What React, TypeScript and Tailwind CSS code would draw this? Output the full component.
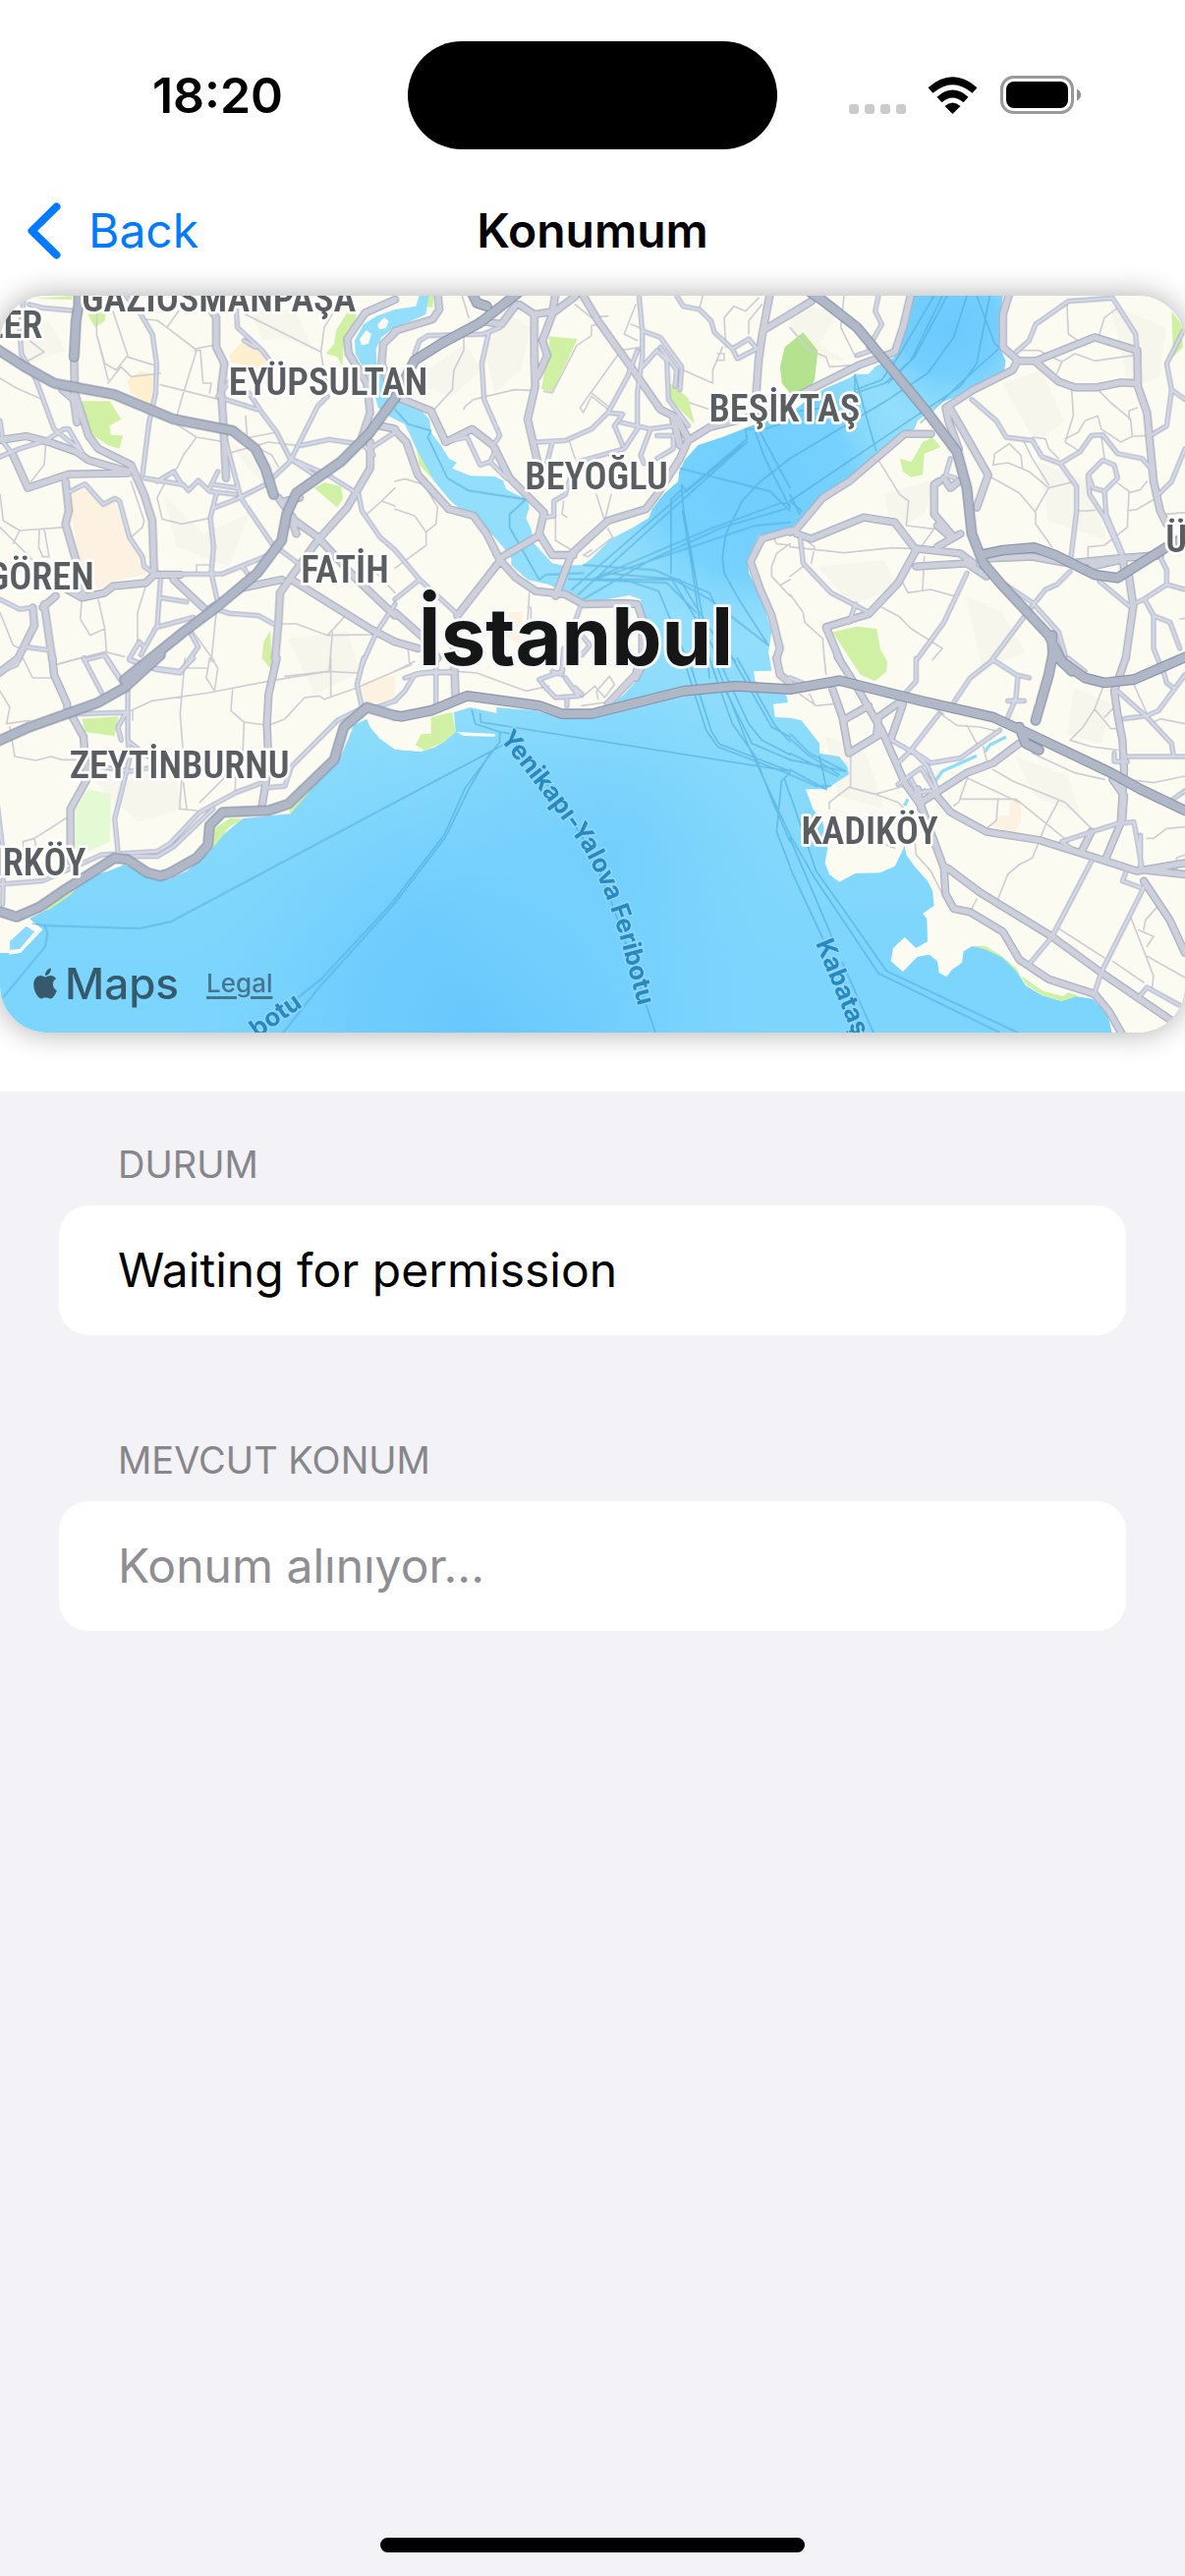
import React from "react";
import { FaApple } from "react-icons/fa";

type Tile = {
  x: number;
  y: number;
  highway: string;
  major: string;
  mid: string;
  minor: string;
  ferry: string;
};

const tiles: Tile[] = [
  {
    x: 0,
    y: 0,
    highway:
      "M-10 195 L75 250 L165 300 L350 335 L530 410 L710 445 L780 500 L810 560 L835 640 M1206 345 L1130 450 L1040 540 L905 635 L875 700 L860 780 L785 880 L660 985 L560 1060 L380 1205 M240 20 L240 60 L232 110 L226 220",
    major:
      "M226 220 L228 330 L270 460 L300 500 L400 550 L440 640 L465 720 L470 870 M190 320 L225 350 L235 420 M-10 475 L80 462 L150 480 L235 510 L270 535 L390 570 M85 620 L210 578 L390 575 M470 885 L445 910 L345 920 L320 940 L250 955 L205 930 M1206 45 L1115 85 L1060 165 L1065 210 L1120 300 L1130 390 L1100 480 M1206 145 L1170 180 L1165 240 L1190 310 M1130 480 L1130 560 L1060 680 L970 780 L890 890 L855 940 L850 1030 L840 1140 M860 900 L740 925 L640 990 M850 650 L900 720 L970 770 L1080 890 L1206 1010 M890 900 L1010 975 L1130 1050 L1206 1090 M100 985 L105 1040 L55 1140 L-10 1190 M135 975 L150 1080 L160 1145 M170 950 L130 985 M530 900 L620 985 M635 60 L660 100 L660 190 L685 240 L675 320 L683 440 L690 590 M40 520 L85 620 M200 600 L210 690 L200 730 L240 870 L255 950 M1206 440 L1160 430 M475 885 L550 885 M870 660 L915 650 M880 690 L905 760",
    mid:
      "M75 33 L60 130 L65 210 L110 290 L165 440 L240 500 M90 60 L130 70 L220 78 M385 33 L430 90 L465 150 L478 240 L475 330 L455 420 L435 580 M0 415 L10 480 L40 520 M0 525 L60 500 L140 475 L195 440 L210 440 L250 510 M440 590 L560 610 L575 628 L605 597 L640 630 L720 640 M720 60 L725 130 L800 200 L830 240 M745 170 L780 190 M760 330 L800 390 L845 450 L885 530 L960 580 M690 350 L785 380 M885 540 L810 610 L720 655 L655 680 M885 540 L970 370 L1000 340 M885 530 L1000 580 L1080 630 M920 490 L1005 472 L1090 485 M480 600 L530 570 L555 610 M690 480 L735 650 L830 790 L910 850 M660 640 L642 710 L652 800 L645 880 L665 970 M545 883 L680 882 L820 825 M740 860 L755 880 M205 635 L260 608 L315 670 L350 652 L365 660 L395 770 L435 830 L440 860 L470 880 M490 900 L480 1040 L430 1130 M490 955 L570 968 M480 1045 L590 1015 M660 990 L700 1003 L790 1010 L835 1035 M1095 640 L1105 690 L1160 770 L1206 810 M1206 975 L1150 1060 L1105 1160 M0 960 L60 990 L100 985 M75 1105 L145 1115 M395 1140 L425 1090 L440 1105 M395 1145 L480 1175 L550 1185 L605 1105 L580 1060 M260 1145 L320 1130 L365 1200 M665 570 L640 620 M655 610 L720 620 M1130 500 L1206 450 M665 340 L705 290 M1100 480 L1140 520",
    minor:
      "M295 60 L295 150 L330 290 M345 80 L390 215 L355 260 L320 240 L295 150 M390 220 L470 245 M330 300 L370 250 L400 280 L490 270 M445 105 L480 108 L510 130 L595 195 L650 185 M510 130 L545 80 M600 200 L560 330 L540 400 M595 200 L612 200 L620 300 L645 300 L640 330 M490 305 L670 350 M750 90 L980 205 L990 130 L1020 80 M980 205 L990 270 L1010 330 M0 285 L50 315 L130 350 M65 150 L135 205 L80 235 M500 400 L600 465 L690 480 M600 465 L560 520 L540 560 L500 590 M500 610 L480 650 L495 715 L555 730 L640 712 M740 470 L845 450 M695 515 L820 480 L905 490 M750 400 L755 480 L830 520 L850 555 M400 600 L440 720 L435 740 L395 775 M60 750 L200 740 M0 640 L10 720 L60 750 L40 790 M0 740 L50 790 L110 850 M120 750 L118 800 L130 830 L150 830 L135 745 M445 920 L420 1000 L420 1090 M250 960 L245 1020 L275 1070 L320 1050 L300 960 M320 1050 L325 1120 M0 1000 L40 1100 L60 1110 M170 1160 L320 1120 L380 1135 M660 1000 L645 1150 M590 1060 L655 1150 M850 1035 L905 1035 L1000 1070 L1050 1015 M1000 1070 L1140 1068 M1015 1060 L1005 1180 L870 1195 M1120 700 L1165 660 L1206 675 M1165 660 L1206 620 M1140 870 L1206 940 M140 480 L135 550 L95 600 M600 875 L600 855 L640 855",
    ferry: "",
  },
  {
    x: 1206,
    y: 0,
    highway: "M375 25 L260 115 L140 180 L60 230 L0 345 M235 25 L250 55 L280 65",
    major:
      "M130 25 L135 75 L115 105 L0 140 M380 60 L425 90 L425 210 L428 310 L405 410 L435 540 M490 25 L480 90 L450 170 L465 215 L435 280 M570 25 L620 110 L720 250 L810 380 L860 405 L895 470 M425 90 L490 80 L550 35 M260 110 L325 120 L370 60 M0 340 L110 385 L155 480 L235 440 L300 490 L350 590 L400 640 L455 695 L440 760 L480 825 L545 825 M1145 25 L1120 160 L1110 230 L1100 370 M1206 90 L1130 135 M895 475 L960 435 L1100 400 M895 475 L870 530 L800 640 L765 685 L650 720 L540 820 L490 950 M440 765 L320 835 M0 445 L35 480 L70 580 L165 685 L240 705 L280 760 L320 840 L370 895 L430 935 L520 945 L575 975 L700 972 L740 975 L755 1020 M315 850 L190 1010 M0 1000 L90 1080 L130 1140 M0 1090 L70 1110 M755 1020 L755 1160 L735 1200 M1206 750 L1120 775 L1085 845 L1115 930 L1150 1010 L1175 1110 L1165 1140 M180 1050 L180 1145 M850 410 L870 490",
    mid:
      "M60 210 L75 170 L100 155 L270 150 L320 130 M285 150 L265 240 L272 350 L320 460 L300 490 M430 480 L520 475 L600 440 L650 390 L710 280 L740 200 M745 33 L755 140 L755 220 L740 330 L740 440 L700 500 L560 540 M755 140 L810 160 L875 250 L870 320 M755 250 L800 200 L830 230 L835 350 L895 430 M810 190 L860 260 L855 310 M860 33 L880 65 L930 75 L965 110 L975 145 L1030 195 L1080 165 L1105 195 L1045 225 L1030 195 M650 390 L695 395 L670 430 L695 490 M690 420 L780 440 L850 430 M780 440 L750 520 L760 545 M800 460 L850 460 L850 500 L800 530 M480 480 L460 560 M150 480 L220 465 L260 550 L290 540 L310 500 M290 540 L340 590 M535 590 L520 640 L485 660 L485 705 L455 710 M0 810 L75 900 L190 1005 M75 900 L0 960 M565 985 L545 1040 L595 1100 L570 1130 M515 1110 L510 1180 M480 1180 L510 1190 M30 1200 L80 1185 L180 1180 M125 1140 L125 1160",
    minor:
      "M205 33 L225 100 M210 160 L210 200 L180 260 L175 320 L120 380 M210 380 L215 370 L240 350 L365 320 L415 322 M600 125 L600 155 L555 185 L480 330 L455 325 M550 60 L600 100 L650 95 M600 125 L620 120 M700 150 L740 170 M700 150 L735 60 M720 120 L745 130 M750 190 L690 200 L565 375 L575 390 L600 340 L650 380 M600 330 L650 370 M530 470 L550 530 M880 260 L970 300 L970 260 L1000 190 M900 360 L960 380 M1010 190 L1005 100 L1035 65 L1070 80 L1110 40 M1080 150 L1080 110 L1120 60 M930 70 L940 33 M985 210 L1005 210 L1005 230 L985 230 M0 600 L30 592 L90 610 L130 680 L125 730 L95 755 L60 705 L0 685 M95 755 L95 795 L0 865 M490 700 L490 780 L540 810 M615 640 L640 720 L660 640 M650 745 L665 770 L590 830 L575 825 L600 810 M515 660 L510 700 L525 710 M1206 790 L1165 820 L1150 860 L1150 890 L1206 950 M1180 915 L1206 900 M410 940 L405 1030 M405 985 L415 985 L415 1035 L390 1035 M0 1180 L60 1150 M40 1115 L45 1160 M1150 760 L1165 790 L1206 795",
    ferry:
      "M0 380 L40 425 L110 445 L100 465 L160 590 L225 628 L400 655 L350 700 L350 740 L440 900 L460 885 L575 880 M540 930 L875 640 L1075 470 L1070 440 L1130 440 L1206 415 M560 945 L740 780 L1075 480 M843 880 L843 655 L875 625 M875 610 L880 680 L940 1020 L960 1200 M878 690 L905 850 L935 1060 L980 1200 M875 610 L890 630 L1060 490 M870 560 L1145 630 L1206 690 M1100 450 L1130 530 L1206 680 M1115 450 L1206 620 M1206 530 L1110 605 L1060 660 L1010 760 L1000 830 L1005 880 L1050 960 L1140 1100 M600 900 L950 750 L1180 665 L1206 670 M575 960 L780 840 L1000 740 L1206 680 M620 895 L1100 735 L1206 725 M575 855 L790 870 L960 940 L980 980 M530 898 L850 900 L960 960 L1140 1100 M530 898 L830 910 L920 1000 M640 880 L870 900 L960 1050 L1040 1150 M700 900 L805 935 L890 1140 M840 890 L1010 1170",
  },
  {
    x: 2412,
    y: 0,
    highway:
      "M65 25 L100 48 L205 130 L420 390 L510 510 L540 620 L555 760 L590 850 L650 920 L790 1070 L830 1150 L860 1180 M580 825 L650 810 L745 802 L810 825 L930 885 L1000 895 L1150 800 L1206 770 M800 1070 L803 1145",
    major:
      "M0 90 L65 50 M0 350 L210 245 L320 205 L345 130 L370 25 M670 25 L650 90 L650 190 L695 230 L680 260 L560 320 L475 375 L485 420 L515 500 M695 232 L750 232 L930 160 L1060 200 M750 235 L820 295 L870 313 L935 313 L1010 298 L1060 300 M1060 200 L1062 310 L1090 390 L1110 600 L1130 690 L1150 730 M430 455 L350 455 L180 600 L100 650 L20 745 L0 755 M490 380 L525 440 L605 580 L570 680 M20 760 L65 775 L225 710 L320 725 L385 810 L330 910 L240 1005 L110 1045 L150 1140 M385 805 L520 820 L560 850 M385 860 L540 850 L600 890 M610 835 L740 830 L850 850 L1000 835 L1130 825 M920 860 L1010 840 M1035 890 L1048 980 L1025 1140 M455 600 L440 610 L440 700 L500 770 M470 590 L490 620 L515 600 M450 800 L520 760 M450 735 L490 770 M1015 830 L1020 870",
    mid:
      "M690 205 L730 170 L750 120 L850 50 L985 40 L1055 150 L1060 210 M1206 130 L1150 240 L1165 320 L1150 430 L1100 460 M1165 320 L1206 350 M555 350 L630 415 L660 465 L740 475 L770 525 L825 545 L885 510 L920 460 L955 458 L1000 515 L1075 530 L1110 570 M825 545 L875 615 L875 690 L858 830 M1206 500 L1165 600 L1125 640 M955 535 L910 580 L925 620 L960 630 L1000 590 L990 550 Z M910 590 L915 640 L960 710 L1010 820 M960 630 L965 700 L1015 820 M270 33 L260 80 L280 120 L240 190 M205 215 L250 200 M30 760 L40 850 L125 940 L240 1000 M200 975 L180 1030 M540 880 L470 1030 L390 1140 M650 910 L740 970 L820 1060 L840 1130 M855 875 L815 915 L780 930 L740 980 L620 1140 M945 905 L1035 980 L1080 960 L1150 915 L1206 930 M1130 830 L1150 870 L1150 915 M1085 965 L1110 1010 L1110 1110 L1130 1160 M1110 1010 L1160 1030 L1190 1110 M490 530 L475 580 L505 590 M850 1140 L900 1180",
    minor:
      "M0 130 L60 200 L110 220 L120 250 L200 245 M165 33 L155 130 L200 220 M845 50 L850 150 L900 185 M1000 70 L960 100 L945 150 M700 200 L760 200 L830 235 L815 270 M830 235 L870 210 L930 232 L1050 215 M860 320 L865 400 L840 480 L880 505 M840 470 L880 450 L900 415 L940 400 L950 440 L1010 480 L1045 462 L1100 460 M940 320 L980 360 L1040 410 L1045 460 M1060 375 L1035 385 L1035 410 M620 550 L625 515 L670 485 L705 520 L710 560 M620 550 L665 543 L730 570 L790 620 L870 600 M710 470 L740 530 L790 610 M740 465 L780 470 L790 500 L820 530 M610 585 L700 635 L750 695 L750 730 L800 800 M790 620 L750 690 M950 460 L960 530 M1000 605 L1035 630 L1030 740 L960 795 L910 800 L910 830 M1035 635 L1070 625 L1090 600 M1030 690 L1060 685 L1120 650 M880 690 L900 690 L930 688 M0 800 L165 818 L310 803 L380 805 M30 765 L75 800 L65 850 M0 890 L40 860 M0 945 L40 1000 L45 1030 L100 1080 L105 1145 M280 985 L330 1010 L370 1050 L465 1110 L435 1145 M410 830 L405 930 M345 910 L360 940 L430 930 L500 950 M1150 700 L1206 695 M355 735 L440 745 L400 800 M1190 1020 L1206 1018 M270 535 L335 640 L362 660 L355 735",
    ferry:
      "M440 33 L330 220 L280 290 L200 320 M465 33 L370 230 L290 300 L200 330 M480 33 L380 220 L300 300 M540 33 L500 160 L420 270 L300 350 L0 530 M610 33 L570 240 L520 310 L340 430 L0 660 M570 33 L625 180 L640 192 L520 300 L400 420 M198 275 L262 505 M198 275 L198 330 M0 390 L100 375 M0 640 L30 700 M0 660 L35 690",
  },
  {
    x: 0,
    y: 1140,
    highway:
      "M490 -10 L380 90 L300 135 L90 210 L-10 255 M-10 770 L50 790 L120 760 L200 705 L350 610 L390 615 L450 655 L490 665 L520 655 L600 610 L635 570 L640 510 L680 470 L820 465 L880 445 L1020 310 L1050 210 L1120 150 L1206 175",
    major:
      "M160 0 L165 50 L205 140 M205 150 L255 240 L265 370 L215 460 L215 620 M845 0 L820 110 L815 200 L820 330 L800 450",
    mid:
      "M255 0 L310 105 M325 0 L370 70 M390 60 L390 240 L395 310 L350 490 L360 590 M240 170 L385 165 L360 210 L370 250 M400 5 L470 30 L550 40 L590 0 M395 255 L450 300 M0 690 L130 680 L310 600 L480 590 L520 565 L610 470 L720 410 L800 380 M400 605 L480 605 L530 575 L650 460 M820 395 L870 390 L890 330 L1030 190 L1110 150 M1110 0 L1090 80 L1105 150 M-8 450 L10 600 L8 750 M300 330 L400 345 L480 330 M1150 150 L1206 130 M0 40 L50 20 L60 0",
    minor:
      "M70 0 L100 60 L155 60 M0 100 L30 150 L20 200 L90 190 M30 210 L45 300 L110 312 L155 300 L190 310 L240 310 M400 160 L465 130 L640 105 L820 70 L1000 40 L1090 45 M1010 0 L1010 115 M565 0 L550 170 L560 300 L548 460 L600 465 M560 380 L570 460 M610 440 L720 330 M640 0 L630 60 L655 100 L665 30 L645 0 M565 30 L630 30 M710 95 L705 160 L745 195 L820 205 M745 195 L740 330 M820 205 L870 185 L930 120 L975 115 L990 125 L1090 90 L1206 40 M215 480 L105 550 L70 560 L75 620 M105 550 L115 600 M405 160 L405 190 M720 330 L718 410 M170 20 L240 0",
    ferry:
      "M100 810 L140 816 L425 825 L520 805 L1206 440 M135 815 L145 840 L138 880 L10 1035 M1206 735 L1180 765 L980 980 L880 1060 M1206 748 L970 1010 L865 1143",
  },
  {
    x: 1206,
    y: 1140,
    highway:
      "M0 175 L20 178 L110 160 L220 115 L440 145 L510 170 L600 170 L880 100 L1040 85 L1206 95",
    major: "M180 0 L185 120 M750 0 L735 50 L650 140 M1165 0 L1175 50 L1206 75",
    mid:
      "M125 0 L125 140 M0 130 L30 100 L60 50 L110 42 L185 45 M515 0 L510 40 L440 65 L465 95 L490 120 L560 115 L520 60 M525 120 L525 145 M550 90 L570 110",
    minor:
      "M190 40 L250 45 L400 100 L470 85 M0 40 L50 20 M570 145 L640 135 M570 120 L610 85 L640 120 L670 80 L655 55 L615 100 L620 125",
    ferry:
      "M0 440 L330 265 M0 735 L150 540 L215 395 L320 255 L320 225 M0 748 L155 545 L225 400 L290 290 M235 160 L245 200 L320 225 L350 230 M260 170 L262 195 L1206 345 M890 30 L950 220 L985 270 L1206 355 M905 30 L965 220 L990 262 L1206 345 M970 30 L1030 200 L1100 300 L1150 430 L1206 560 M985 30 L1080 270 L1206 540 M1000 30 L1080 200 L1120 250 L1206 295 M1030 0 L1150 210 L1206 240 M1045 0 L1160 205 L1206 255 M1010 100 L1090 260 L1206 310 M1206 350 L1180 375 L1165 530 L1206 635 M1190 370 L1206 420 M350 235 Q520 450 590 580 Q670 750 720 920 L795 1143",
  },
  {
    x: 2412,
    y: 1140,
    highway:
      "M0 95 L150 68 L400 130 L620 180 L750 240 L980 350 L1070 400 L1206 465 M800 0 L790 50 L750 190 M830 10 L900 60 L960 75 L1050 65 L1130 30 L1210 -5 M700 210 L720 260 L760 280",
    major:
      "M145 -5 L205 90 L280 220 L350 380 L400 450 L470 640 L475 720 L500 765 L550 775 L650 835 L700 920 L790 980 L930 1025 L975 1080 L1015 1150 M130 95 L160 180 L180 290 L270 235 M170 185 L240 145 M345 140 L310 240 M270 180 L340 130 M270 180 L265 230 M480 640 L580 715 L800 850 L950 960 L1170 1110 M400 440 L540 350 L620 320 L700 260 M390 400 L400 460 M440 410 L490 470 L600 530 L760 555 L920 605 L1060 650 L1206 625 M1025 0 L990 100 L1000 170 L1015 250 L1020 340 L1010 500 M985 370 L1020 420 L1015 490 L965 610 M1080 680 L1160 800 L1206 900 M1070 645 L1206 660 M890 590 L920 530",
    mid:
      "M385 0 L385 70 L340 120 M455 170 L370 280 L330 320 M370 280 L430 320 L520 305 L640 220 M310 250 L380 290 L420 330 L450 400 M330 385 L400 335 L440 400 M620 5 L690 50 L730 60 M695 60 L690 120 L665 180 M665 130 L715 130 M620 5 L550 60 L500 135 M920 620 L800 850 L730 935 M1080 700 L950 960 L930 1020 M1000 100 L1090 180 L1165 260 L1170 295 M1020 185 L1090 175 L1125 160 L1206 50 M1140 40 L1150 75 L1170 90 M1020 300 L1206 300 M830 560 L920 530 L1000 505 L1050 500 L1075 640 M1070 540 L1070 640 M830 560 L870 590 M1190 1060 L1090 1005 L1065 1035 M990 290 L990 315 L1030 315 M1025 655 L1015 680 L1070 700 M370 370 L390 410 L430 405 M1170 430 L1206 405 M0 60 L60 85",
    minor:
      "M105 0 L110 50 M185 290 L185 390 L120 440 L120 460 M185 395 L260 415 L350 390 M260 415 L330 440 L370 480 M30 110 L80 145 L130 140 M60 110 L75 140 M620 340 L680 375 L840 440 L920 520 M520 430 L690 430 L850 560 M540 370 L515 440 L500 450 M820 435 L780 510 L740 610 L700 630 L665 660 L635 735 M635 430 L630 495 L600 520 M540 365 L700 440 M380 540 L385 600 L430 650 L465 720 M570 735 L555 765 M740 290 L870 350 L960 370 M1030 370 L1110 380 L1206 360 M955 90 L930 155 L895 210 L855 250 L920 270 L1000 280 M930 155 L980 215 L1000 215 M960 180 L985 155 M1050 80 L1090 170 M1100 200 L1130 185 L1206 200 M1090 550 L1110 550 L1150 520 L1206 515 M820 825 L960 915 M985 925 L1080 990 M1040 790 L1110 970 L1105 1010 M1120 760 L1085 800 L1080 830 M1065 830 L1110 850 L1090 880 M1090 910 L1206 975 M460 170 L510 205 L580 210 L640 225 M540 205 L570 260 M400 130 L470 170 M590 270 L600 310 M1180 660 L1180 610 L1206 600 M240 550 L320 580",
    ferry:
      "M0 230 L60 290 L170 345 M0 245 L55 295 L150 355 M0 290 L145 360 M0 310 L170 345 M0 340 L110 400 M0 355 L80 390 L125 390 M90 300 L112 400 M0 415 L80 650 L180 790 L295 955 L695 1143 M0 540 L75 670 L270 962 L640 1143 M0 550 L130 855 M0 640 L100 855 M160 930 L255 1143",
  },
];

const SEA =
  "M2790 33 L2777 100 L2757 160 L2730 222 L2672 250 L2652 272 L2612 272 L2592 285 L2522 315 L2472 345 L2410 395 L2296 430 L2206 465 L2131 490 L2091 535 L2074 570 L2071 600 L2026 640 L1991 685 L1981 712 L1926 745 L1866 775 L1806 835 L1781 855 L1721 857 L1686 850 L1631 790 L1621 745 L1606 712 L1616 680 L1611 655 L1576 640 L1546 625 L1536 598 L1511 585 L1436 583 L1381 560 L1394 542 L1371 530 L1346 490 L1316 450 L1311 410 L1261 358 L1206 330 L1178 290 L1150 240 L1148 195 L1165 160 L1206 128 L1246 115 L1300 90 L1310 33 L1280 33 L1270 65 L1206 75 L1150 95 L1110 120 L1083 170 L1085 210 L1105 245 L1130 290 L1155 375 L1195 405 L1236 425 L1271 500 L1326 600 L1376 660 L1411 690 L1456 705 L1486 745 L1536 800 L1561 835 L1561 855 L1611 900 L1676 915 L1766 960 L1826 965 L1921 948 L1956 960 L1961 1000 L1981 1060 L1976 1120 L1951 1200 L1906 1250 L1866 1285 L1806 1320 L1716 1325 L1636 1300 L1516 1290 L1516 1308 L1436 1290 L1386 1305 L1391 1365 L1356 1395 L1326 1412 L1286 1425 L1206 1418 L1160 1385 L1130 1350 L1120 1325 L1080 1345 L1045 1430 L980 1500 L885 1615 L740 1630 L680 1680 L640 1730 L570 1790 L515 1815 L450 1800 L380 1770 L330 1790 L275 1805 L215 1860 L150 1905 L90 1935 L130 1968 L62 2040 L-5 2040 L-5 2290 L3397 2290 L3382 2230 L3337 2180 L3282 2172 L3242 2187 L3182 2170 L3132 2140 L3097 2085 L3052 2045 L3002 2020 L2967 2020 L2942 2035 L2937 2070 L2907 2090 L2890 2113 L2867 2100 L2862 2065 L2837 2045 L2800 2052 L2757 2097 L2720 2065 L2727 2025 L2762 1992 L2797 2025 L2832 2005 L2830 1935 L2817 1920 L2852 1895 L2847 1850 L2832 1820 L2792 1775 L2767 1740 L2762 1710 L2754 1730 L2732 1775 L2687 1795 L2612 1797 L2562 1823 L2532 1800 L2519 1765 L2527 1720 L2512 1640 L2482 1600 L2460 1540 L2522 1540 L2592 1495 L2587 1470 L2562 1440 L2502 1430 L2502 1400 L2447 1330 L2412 1322 L2366 1320 L2361 1280 L2406 1275 L2400 1250 L2306 1210 L2301 1180 L2356 1178 L2346 1120 L2356 1060 L2326 960 L2286 880 L2281 840 L2316 765 L2412 745 L2452 710 L2512 650 L2592 610 L2752 460 L2792 440 L2802 415 L2872 360 L2932 335 L3067 262 L3070 230 L3052 190 L3052 100 L3062 33 Z";

const parks = [
  "250,355 335,355 370,410 335,430 338,458 375,460 365,500 330,490 285,460 265,420",
  "105,42 220,33 220,45",
  "268,90 325,80 320,110 290,130",
  "1060,85 1090,85 1080,130 1050,180 1045,250 1030,220 995,210 1020,180 1025,140",
  "960,620 990,603 1040,615 1048,650 1030,680",
  "825,1055 832,1180 800,1140 805,1090",
  "1676,157 1763,165 1686,330 1653,318 1666,240 1679,215",
  "2046,300 2101,345 2121,425 2046,350",
  "1271,500 1316,550 1326,600 1281,550",
  "1306,33 1324,33 1321,70 1301,65",
  "2747,530 2782,540 2817,480 2847,465 2872,495 2822,515 2817,580 2782,587 2757,570",
  "2542,1060 2617,1043 2677,1050 2687,1110 2709,1150 2707,1180 2672,1210 2627,1190",
  "3577,80 3607,120 3612,190 3582,220",
  "250,1325 362,1318 350,1378 260,1365",
];

const shoreParks = [
  "885,1600 960,1530 900,1600 885,1618",
  "650,1720 655,1660 700,1630 745,1630 700,1655",
  "110,1912 275,1800 215,1862 150,1908",
  "1316,1320 1381,1305 1391,1365 1356,1395 1296,1422 1269,1405 1286,1372 1316,1370",
  "2967,2018 3012,2020 3052,2045 3102,2085 3132,2135 3182,2170 3242,2187 3292,2170 3262,2160 3245,2172 3182,2155 3112,2105 3062,2055 3012,2030",
];

const yellowBlocks = [
  "700,215 735,178 790,195 815,240 770,260 705,235",
  "388,292 430,262 468,275 462,370 400,330",
];

const peachBlocks = [
  "210,645 260,620 310,675 350,660 390,770 430,840 460,880 350,905 300,930 240,840 225,740",
  "1556,1000 1596,1000 1586,1095 1546,1080",
  "1105,1215 1206,1190 1206,1265 1110,1280",
  "3022,1650 3052,1620 3082,1620 3082,1575 3117,1580 3117,1640 3097,1675",
];

const hillShades = [
  "760,60 900,80 960,200 860,160 800,170",
  "700,480 860,560 830,640 760,560",
  "0,90 60,150 150,110 200,200 90,240",
  "1500,60 1620,130 1590,260 1510,330 1480,200",
  "1250,300 1420,180 1470,260 1380,340",
  "2400,60 2560,80 2500,180 2580,230 2440,220",
  "3060,300 3180,260 3250,420 3160,480",
  "2700,640 2860,590 2820,700 2720,760",
  "3170,540 3320,600 3380,780 3200,720",
  "3390,60 3560,130 3540,280 3450,320",
  "2950,950 3060,1000 3130,1120 3000,1180",
  "2500,860 2700,840 2740,920 2600,980",
  "3100,1440 3260,1500 3300,1620 3160,1560",
  "250,1480 380,1520 520,1450 560,1600 420,1640",
  "500,640 620,760 760,700 700,860 540,800",
  "880,1080 1060,1060 1100,1180 960,1250",
  "2520,1380 2640,1420 2700,1600 2560,1560",
  "3280,1230 3400,1280 3360,1400 3260,1370",
];

type District = { text: string; x: number; y: number; anchor: "start" | "middle" | "end" };

const districts: District[] = [
  { text: "GAZİOSMANPAŞA", x: 668, y: 80, anchor: "middle" },
  { text: "LER", x: 130, y: 162, anchor: "end" },
  { text: "EYÜPSULTAN", x: 1002, y: 337, anchor: "middle" },
  { text: "BEYOĞLU", x: 1821, y: 625, anchor: "middle" },
  { text: "BEŞİKTAŞ", x: 2395, y: 418, anchor: "middle" },
  { text: "FATİH", x: 1053, y: 910, anchor: "middle" },
  { text: "GÖREN", x: 287, y: 930, anchor: "end" },
  { text: "ZEYTİNBURNU", x: 548, y: 1505, anchor: "middle" },
  { text: "KADIKÖY", x: 2655, y: 1707, anchor: "middle" },
  { text: "IRKÖY", x: 262, y: 1802, anchor: "end" },
  { text: "Ü", x: 3559, y: 815, anchor: "start" },
];

type RoadKind = "highway" | "major" | "mid" | "minor" | "ferry";

function Roads({ kind, color, width, opacity = 1 }: { kind: RoadKind; color: string; width: number; opacity?: number }) {
  return (
    <g fill="none" stroke={color} strokeWidth={width} strokeLinejoin="round" strokeLinecap="round" opacity={opacity}>
      {tiles.map((t) => (
        <path key={`${t.x}-${t.y}`} d={t[kind]} transform={`translate(${t.x} ${t.y})`} />
      ))}
    </g>
  );
}

function Shapes({ items, color }: { items: string[]; color: string }) {
  return (
    <g fill={color}>
      {items.map((p) => (
        <polygon key={p} points={p} />
      ))}
    </g>
  );
}

function IstanbulMap() {
  return (
    <svg viewBox="0 33 3618 2250" className="block w-full" role="img" aria-label="İstanbul">
      <defs>
        <radialGradient id="deepSouth" gradientUnits="userSpaceOnUse" cx="1450" cy="2250" r="900">
          <stop offset="0" stopColor="#69c8fc" />
          <stop offset="0.4" stopColor="#6fccfd" />
          <stop offset="1" stopColor="#78d3fd" stopOpacity="0" />
        </radialGradient>
        <radialGradient id="deepMid" gradientUnits="userSpaceOnUse" cx="1850" cy="1750" r="600">
          <stop offset="0" stopColor="#72cefc" />
          <stop offset="1" stopColor="#7ad4fd" stopOpacity="0" />
        </radialGradient>
        <radialGradient id="deepStrait" gradientUnits="userSpaceOnUse" cx="2300" cy="600" r="480">
          <stop offset="0" stopColor="#70cdfd" />
          <stop offset="0.6" stopColor="#76d1fd" />
          <stop offset="1" stopColor="#8cdbfb" stopOpacity="0" />
        </radialGradient>
        <radialGradient id="deepNorth" gradientUnits="userSpaceOnUse" cx="2900" cy="130" r="300">
          <stop offset="0" stopColor="#6cc9fd" />
          <stop offset="0.5" stopColor="#74cffd" />
          <stop offset="1" stopColor="#8cdbfb" stopOpacity="0" />
        </radialGradient>
        <linearGradient id="seaBase" gradientUnits="userSpaceOnUse" x1="0" y1="1100" x2="0" y2="2100">
          <stop offset="0" stopColor="#92defb" />
          <stop offset="0.4" stopColor="#88dafb" />
          <stop offset="1" stopColor="#7cd5fd" />
        </linearGradient>
        <path id="yalovaLine" d="M1524 1385 Q1706 1610 1786 1730 Q1866 1880 1906 2040 L2000 2400" />
        <path id="kabatasLine" d="M2490 2010 L2670 2450" />
        <path id="botuLine" d="M558 2460 L926 2202" />
      </defs>

      <rect x="0" y="0" width="3618" height="2300" fill="#fcfbf2" />
      <g opacity="0.7">
        <Shapes items={hillShades} color="#f5f4eb" />
      </g>
      <Shapes items={peachBlocks} color="#fdf1e2" />
      <Shapes items={yellowBlocks} color="#fef0cf" />
      <Shapes items={parks} color="#d0f1a4" />
      <polygon points="270,1540 340,1555 335,1700 270,1730 228,1720 230,1600" fill="#e4fad5" />
      <polygon points="2396,190 2452,145 2497,200 2487,290 2467,328 2412,330 2387,300 2382,250" fill="#b4e28f" />

      <path d={SEA} fill="url(#seaBase)" />
      <path d={SEA} fill="url(#deepSouth)" />
      <path d={SEA} fill="url(#deepMid)" />
      <path d={SEA} fill="url(#deepStrait)" />
      <path d={SEA} fill="url(#deepNorth)" />
      <path
        d="M2807 1550 L2827 1540 M2852 1520 L2877 1485 L2932 1460 L2982 1438 M3007 1425 L3022 1405 L3072 1380 M2762 1590 L2772 1570"
        fill="none"
        stroke="#8fdcfb"
        strokeWidth="10"
      />
      <g fill="#fcfbf2">
        <polygon points="1120,1325 1206,1310 1320,1310 1316,1370 1269,1405 1286,1425 1206,1418 1160,1385 1130,1350" />
        <polygon points="1393,1365 1511,1371 1511,1379 1416,1377" />
        <polygon points="1098,165 1118,138 1134,150 1125,180 1103,184" />
        <polygon points="1152,122 1172,100 1187,110 1178,132 1158,136" />
        <polygon points="0,2020 30,2015 28,2045 62,2040 130,1968 122,1962 60,2030 45,2030 28,2010 80,1958 95,1950 80,1930 0,1930" />
      </g>
      <polygon points="30,2005 80,1958 105,1975 60,2028 30,2030" fill="#8bdafb" />
      <Shapes items={shoreParks} color="#d0f1a4" />

      <Roads kind="minor" color="#cfced4" width={5} />
      <Roads kind="ferry" color="#4da9da" width={5} opacity={0.6} />
      <Roads kind="mid" color="#a9b2c8" width={15} />
      <Roads kind="major" color="#a7afc0" width={25} />
      <Roads kind="mid" color="#d6d9e5" width={9} />
      <Roads kind="major" color="#ced0dc" width={18} />
      <Roads kind="highway" color="#8a93aa" width={32} />
      <Roads kind="highway" color="#b0b8c7" width={25} />

      <g
        fill="#5a5e60"
        stroke="#ffffff"
        strokeWidth="16"
        strokeLinejoin="round"
        paintOrder="stroke"
        fontSize="115"
        fontWeight="600"
        fontFamily="'Liberation Sans Narrow', 'Roboto Condensed', Roboto, sans-serif"
      >
        {districts.map((d) => (
          <text key={d.text} x={d.x} y={d.y} textAnchor={d.anchor}>
            {d.text}
          </text>
        ))}
      </g>
      <text
        x="1758"
        y="1160"
        textAnchor="middle"
        fill="#161616"
        stroke="#f4f8fb"
        strokeWidth="18"
        strokeLinejoin="round"
        paintOrder="stroke"
        fontSize="244"
        fontWeight="700"
        fontFamily="Inter, sans-serif"
      >
        İstanbul
      </text>
      <g
        fill="#2689bf"
        stroke="#8fd6fa"
        strokeWidth="10"
        strokeLinejoin="round"
        paintOrder="stroke"
        fontSize="77"
        fontWeight="700"
        fontFamily="Inter, sans-serif"
      >
        <text>
          <textPath href="#yalovaLine">Yenikapı-Yalova Feribotu</textPath>
        </text>
        <text>
          <textPath href="#kabatasLine">Kabataş</textPath>
        </text>
        <text textAnchor="end">
          <textPath href="#botuLine" startOffset="100%">
            botu
          </textPath>
        </text>
      </g>
    </svg>
  );
}

function StatusIcons() {
  return (
    <div className="flex items-center gap-[22px]">
      <div className="flex items-center gap-5">
        <svg width="58" height="40" viewBox="0 0 58 40" fill="#cbcbcb" aria-hidden="true">
          <rect x="0" y="29" width="10" height="10" rx="3" />
          <rect x="16" y="29" width="10" height="10" rx="3" />
          <rect x="32" y="29" width="10" height="10" rx="3" />
          <rect x="48" y="29" width="10" height="10" rx="3" />
        </svg>
        <svg width="54" height="40" viewBox="943 77 54 40" aria-hidden="true">
          <path d="M970.5 116 L962.5 108 Q970.5 101 978.5 108 Z" />
          <path
            d="M948 92 Q970.5 72.500 993 92 M957 101.500 Q970.500 89.500 984 101.500"
            fill="none"
            stroke="#000"
            strokeWidth="7.5"
          />
        </svg>
      </div>
      <svg width="83" height="40" viewBox="1018 78 83 40" aria-hidden="true">
        <rect x="1019.5" y="79.5" width="72" height="36" rx="12" fill="none" stroke="#9a9a9a" strokeWidth="3" />
        <rect x="1024" y="84" width="63" height="27" rx="8" />
        <path d="M1096 91.500 Q1100 93.500 1100 97.500 Q1100 101.500 1096 103.500 Z" fill="#8f8f8f" />
      </svg>
    </div>
  );
}

function Section({ title, children, muted = false }: { title: string; children: React.ReactNode; muted?: boolean }) {
  return (
    <section>
      <h2 className="mb-[18px] px-[60px] text-[38px] leading-[48px] text-[#86868b]">{title}</h2>
      <p
        className={
          muted
            ? "rounded-[30px] bg-white px-[60px] py-8 text-[48px] leading-[68px] text-[#8e8e93]"
            : "rounded-[30px] bg-white px-[60px] py-8 text-[48px] leading-[68px] text-black"
        }
      >
        {children}
      </p>
    </section>
  );
}

export default function App() {
  return (
    <div className="flex min-h-screen flex-col bg-[#f2f2f7] font-[Inter,sans-serif] text-black">
      <div className="bg-white pb-[60px]">
        <div className="grid grid-cols-[1fr_376px_1fr] items-center pt-[42px]">
          <div className="pl-7 text-center text-[50px] leading-[60px] font-semibold">18:20</div>
          <div className="h-[110px] rounded-full bg-black" />
          <div className="flex justify-center pr-8">
            <StatusIcons />
          </div>
        </div>
        <header className="mt-4 grid h-[133px] grid-cols-[1fr_auto_1fr] items-center">
          <button type="button" className="flex items-center gap-7 justify-self-start pl-7 text-[48px] leading-[60px] text-[#007aff]">
            <svg width="34" height="58" viewBox="0 0 34 58" fill="none" aria-hidden="true">
              <path d="M29.500 4.500 L4.500 29 L29.500 53.500" stroke="#007aff" strokeWidth="8" strokeLinecap="round" strokeLinejoin="round" />
            </svg>
            Back
          </button>
          <h1 className="text-[48px] leading-[60px] font-semibold">Konumum</h1>
        </header>
        <div className="relative overflow-hidden rounded-[48px] shadow-[0_0_30px_rgba(0,0,0,0.33)]">
          <IstanbulMap />
          <div className="absolute bottom-[22px] left-[30px] flex items-center text-[#365a6c]">
            <FaApple className="mr-1 size-8 scale-y-110" aria-hidden="true" />
            <span className="text-[44px] leading-[56px] font-medium">Maps</span>
            <a href="#legal" className="ml-7 text-[26px] leading-[32px] font-medium text-[#467590] underline decoration-[3px] underline-offset-4">
              Legal
            </a>
          </div>
        </div>
      </div>
      <main className="flex flex-1 flex-col gap-[103px] px-[60px] pt-[50px]">
        <Section title="DURUM">Waiting for permission</Section>
        <Section title="MEVCUT KONUM" muted>
          Konum alınıyor...
        </Section>
      </main>
      <footer className="flex justify-center pb-6">
        <div className="h-[15px] w-[432px] rounded-full bg-black" />
      </footer>
    </div>
  );
}
